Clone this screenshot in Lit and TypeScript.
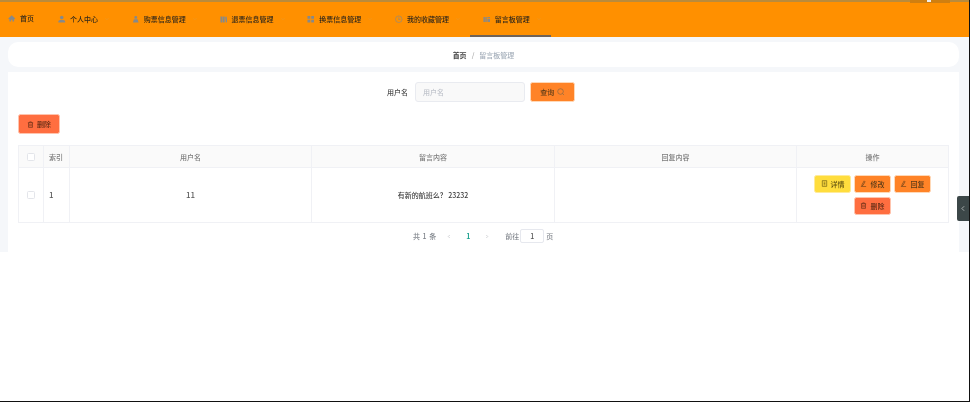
import { LitElement, html, css, svg } from "lit";
import { customElement } from "lit/decorators.js";

const ic = (body: unknown, cls = "ic") => html`<svg class=${cls} viewBox="0 0 16 16">${body}</svg>`;
const home = svg`<path fill="currentColor" d="M8 1.500 0.500 8.500 2 10l1-.9V15h3.600v-4h2.800v4H13V9.100l1 .9 1.500-1.500z"/>`;
const user = svg`<circle fill="currentColor" cx="8" cy="4.500" r="3.800"/><path fill="currentColor" d="M1 15v-2.500C1 10.500 3.500 9.500 8 9.500s7 1 7 3V15z"/>`;
const user2 = svg`<circle fill="currentColor" cx="8" cy="4" r="3"/><path fill="currentColor" d="M2 15l2-7h8l2 7z"/>`;
const books = svg`<path fill="currentColor" d="M1 2h4v13H1zM6 2h4v13H6zM11 3l3-1 1.500 12.500-3 .5z"/>`;
const grid = svg`<path fill="currentColor" d="M1 1h6v6H1zM9 1h6v6H9zM1 9h6v6H1zM9 9h6v6H9z"/>`;
const clock = svg`<circle fill="none" stroke="currentColor" stroke-width="1.300" cx="8" cy="8" r="7"/><path fill="none" stroke="currentColor" stroke-width="1.300" d="M8 4v4.500h3.500"/>`;
const board = svg`<path fill="currentColor" d="M1 3h3v11H1zM5 3h3v11H5zM9.500 3H15v3H9.500zM9.500 7.500H15V14H9.500z"/>`;
const trash = svg`<path fill="none" stroke="currentColor" stroke-width="1.400" d="M2 4h12M6 4V2h4v2M3.500 4v10.500h9V4M6.500 7v5M9.500 7v5"/>`;
const edit = svg`<path fill="none" stroke="currentColor" stroke-width="1.400" d="M9.500 2 5 10l-1 3 3-1 4.500-8zM2 15h12"/>`;
const doc = svg`<path fill="none" stroke="currentColor" stroke-width="1.400" d="M3 1.500h10v13H3zM6 5h4M6 8h4M6 11h4"/>`;
const search = svg`<circle fill="none" stroke="currentColor" stroke-width="1.500" cx="7.500" cy="7.500" r="6"/><path fill="none" stroke="currentColor" stroke-width="1.500" d="m12 12 3 3"/>`;
const chevD = svg`<path fill="none" stroke="currentColor" stroke-width="1.500" d="m2 5 6 6 6-6"/>`;
const chevL = svg`<path fill="none" stroke="currentColor" stroke-width="2" d="M11 2 5 8l6 6"/>`;
const chevR = svg`<path fill="none" stroke="currentColor" stroke-width="2" d="m5 2 6 6-6 6"/>`;

const navItems: [unknown, string, boolean][] = [
  [user, "个人中心", false],
  [user2, "购票信息管理", false],
  [books, "退票信息管理", false],
  [grid, "换票信息管理", false],
  [clock, "我的收藏管理", false],
  [board, "留言板管理", true],
];

@customElement("app-root")
export class AppRoot extends LitElement {
  static styles = css`
    :host {
      display: block;
      box-sizing: border-box;
      width: 970px;
      height: 402px;
      overflow: hidden;
      position: relative;
      background: #fff;
      border-right: 1px solid #111;
      border-bottom: 1px solid #111;
      font-family: "Noto Sans CJK SC", "Noto Sans", sans-serif;
      font-size: 7px;
      color: #606266;
    }
    .page { filter: blur(0.4px); }
    .topline { height: 2px; background: #b98b3c; }
    .corner {
      position: absolute; top: 0; left: 910px; width: 40px; height: 3px; background: #d07f10;
    }
    .corner i { position: absolute; left: 17px; top: 0; width: 4px; height: 2px; background: #eee; }
    nav {
      height: 34.500px; background: #ff9000; display: flex; padding-left: 8px; color: #33291a; font-weight: 500;
    }
    .item {
      display: flex; align-items: center; padding: 0 9.750px 0 13px; gap: 5px; position: relative;
      box-sizing: border-box; height: 34.500px; line-height: 10px;
    }
    .item.first { padding: 0 11px 2px 0; }
    .item.active::after {
      content: ""; position: absolute; left: 0; right: 0; bottom: 0; height: 1.500px; background: #6f6258;
    }
    .ic { width: 7.500px; height: 8.500px; color: #85898c; flex: none; margin-right: -.5px; }
    .item .chev { width: 4px; height: 4px; color: #d9a24a; margin-left: 2px; margin-right: 0; flex: none; }
    .body {
      background: #f5f7fa; height: 215.500px; padding: 5.500px 10px 0 8px; box-sizing: border-box;
      display: flex; flex-direction: column; gap: 5px;
    }
    .crumb {
      height: 25px; background: #fff; border-radius: 10px; display: flex; align-items: center;
      justify-content: center; gap: 5px; flex: none;
    }
    .crumb b { font-weight: 700; color: #444; }
    .crumb span { color: #a4aeba; font-weight: 500; }
    .crumb .sep { color: #aaa; }
    .panel { background: #fff; flex: 1; padding: 10px 10px 0; min-height: 0; font-weight: 500; }
    .filter {
      display: flex; justify-content: center; align-items: center; height: 20px;
      margin-left: -5px;
    }
    .filter label { color: #4c4c4c; margin-right: 7px; }
    .input {
      width: 110px; height: 20px; box-sizing: border-box; background: #f9f9f9;
      border: 1px solid #e9ebf0; border-radius: 3px; padding-left: 7px; color: #c0c4cc;
      display: flex; align-items: center; margin-right: 5px;
    }
    .btn {
      display: inline-flex; align-items: center; justify-content: center; gap: 3px; box-sizing: border-box;
      border-radius: 2.500px; color: #5c3c18; border: 1px solid #ffd9b8; white-space: nowrap;
    }
    .btn .ic { width: 7px; height: 7px; color: inherit; margin-right: 0; }
    .query { width: 45px; height: 20px; background: #ff8327; }
    .query .ic { width: 7.500px; height: 7.500px; color: #8a6a45; }
    .tools { margin-top: 12px; height: 20px; display: flex; }
    .del { background: #ff6e40; color: #5c2a14; border-color: #ffc4ae; }
    .tools .del { width: 42px; }
    .table {
      margin-top: 11px; width: 931px; box-sizing: border-box; border: 1px solid #f0f1f5; border-width: 1px 0 1px 1px;
      display: grid; grid-template-columns: 25px 26px 242px 243px 242px 152px;
    }
    .cell {
      display: flex; align-items: center; justify-content: center; box-sizing: border-box;
      border-right: 1px solid #f0f1f5;
    }
    .head { height: 22px; background: #fafafa; border-bottom: 1px solid #f0f1f5; color: #7d7d7d; }
    .row { height: 54px; color: #5c5c5c; padding-bottom: 1px; }
    .num { font-size: 8px; }
    .left { justify-content: flex-start; padding-left: 5px; }
    .box { width: 8px; height: 8px; border: 1px solid #e3e5ea; border-radius: 1.500px; background: #fff; box-sizing: border-box; }
    .text { color: #3c3c3c; }
    .ops { display: flex; flex-wrap: wrap; justify-content: center; align-content: center; gap: 4px 3.600px; width: 118px; }
    .ops .btn { width: 36.400px; height: 18px; }
    .detail { background: #ffdd3d; color: #5f5010; border-color: #ffeb9a; }
    .edit { background: #ff8327; }
    .pager {
      display: flex; align-items: center; height: 14px; margin-top: 6px; padding-left: 395px; color: #80858c;
    }
    .pager .total { word-spacing: 1px; }
    .pager .arrow { width: 4px; height: 5px; color: #a8abb0; }
    .pager .cur { color: #1fa391; font-weight: 700; width: 4px; text-align: center; margin: 0 15px; }
    .pager .to { margin-left: 16px; margin-right: 1px; }
    .pinput {
      width: 24px; height: 14px; box-sizing: border-box; border: 1px solid #e6e8ee; border-radius: 2px;
      display: flex; align-items: center; justify-content: center; color: #555; margin-right: 2px;
    }
    .tab {
      position: absolute; left: 957px; top: 196px; width: 12px; height: 25px; background: #3c4748;
      border-radius: 2px 0 0 2px; display: flex; align-items: center; justify-content: center; color: #c8cccc;
    }
    .tab svg { width: 6px; height: 7px; }
  `;

  render() {
    return html`
      <div class="page">
        <div class="topline"></div>
        <nav>
          <div class="item first">${ic(home)}<span>首页</span></div>
          ${navItems.map(
            ([icon, label, active]) => html`
              <div class="item ${active ? "active" : ""}">
                ${ic(icon)}<span>${label}</span>${ic(chevD, "chev")}
              </div>
            `
          )}
        </nav>
        <div class="body">
          <div class="crumb"><b>首页</b><span class="sep">/</span><span>留言板管理</span></div>
          <div class="panel">
            <div class="filter">
              <label>用户名</label>
              <div class="input">用户名</div>
              <div class="btn query">查询 ${ic(search)}</div>
            </div>
            <div class="tools"><div class="btn del">${ic(trash)} 删除</div></div>
            <div class="table">
              <div class="cell head"><span class="box"></span></div>
              <div class="cell head left">索引</div>
              <div class="cell head">用户名</div>
              <div class="cell head">留言内容</div>
              <div class="cell head">回复内容</div>
              <div class="cell head">操作</div>
              <div class="cell row"><span class="box"></span></div>
              <div class="cell row left num">1</div>
              <div class="cell row num">11</div>
              <div class="cell row text">有新的航班么？ 23232</div>
              <div class="cell row"></div>
              <div class="cell row">
                <div class="ops">
                  <div class="btn detail">${ic(doc)} 详情</div>
                  <div class="btn edit">${ic(edit)} 修改</div>
                  <div class="btn edit">${ic(edit)} 回复</div>
                  <div class="btn del">${ic(trash)} 删除</div>
                </div>
              </div>
            </div>
            <div class="pager">
              <span class="total">共 1 条</span>
              <svg class="arrow" style="margin-left:11px" viewBox="0 0 16 16">${chevL}</svg>
              <span class="cur">1</span>
              <svg class="arrow" viewBox="0 0 16 16">${chevR}</svg>
              <span class="to">前往</span>
              <div class="pinput">1</div>
              <span>页</span>
            </div>
          </div>
        </div>
      </div>
      <div class="corner"><i></i></div>
      <div class="tab"><svg viewBox="0 0 16 16">${chevL}</svg></div>
    `;
  }
}
